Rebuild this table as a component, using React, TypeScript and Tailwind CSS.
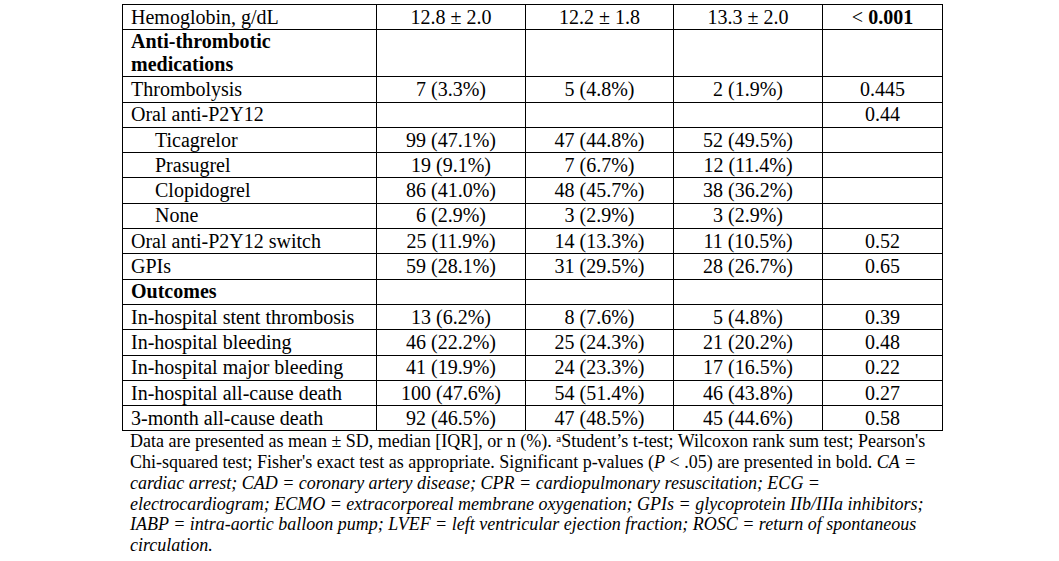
import React from "react";

type Row = {
  label: string;
  a?: string;
  b?: string;
  c?: string;
  p?: React.ReactNode;
  bold?: boolean;
  indent?: boolean;
};

const rows: Row[] = [
  {
    label: "Hemoglobin, g/dL",
    a: "12.8 ± 2.0",
    b: "12.2 ± 1.8",
    c: "13.3 ± 2.0",
    p: (
      <>
        &lt; <b>0.001</b>
      </>
    ),
  },
  { label: "Anti-thrombotic medications", bold: true },
  { label: "Thrombolysis", a: "7 (3.3%)", b: "5 (4.8%)", c: "2 (1.9%)", p: "0.445" },
  { label: "Oral anti-P2Y12", p: "0.44" },
  { label: "Ticagrelor", a: "99 (47.1%)", b: "47 (44.8%)", c: "52 (49.5%)", indent: true },
  { label: "Prasugrel", a: "19 (9.1%)", b: "7 (6.7%)", c: "12 (11.4%)", indent: true },
  { label: "Clopidogrel", a: "86 (41.0%)", b: "48 (45.7%)", c: "38 (36.2%)", indent: true },
  { label: "None", a: "6 (2.9%)", b: "3 (2.9%)", c: "3 (2.9%)", indent: true },
  { label: "Oral anti-P2Y12 switch", a: "25 (11.9%)", b: "14 (13.3%)", c: "11 (10.5%)", p: "0.52" },
  { label: "GPIs", a: "59 (28.1%)", b: "31 (29.5%)", c: "28 (26.7%)", p: "0.65" },
  { label: "Outcomes", bold: true },
  { label: "In-hospital stent thrombosis", a: "13 (6.2%)", b: "8 (7.6%)", c: "5 (4.8%)", p: "0.39" },
  { label: "In-hospital bleeding", a: "46 (22.2%)", b: "25 (24.3%)", c: "21 (20.2%)", p: "0.48" },
  { label: "In-hospital major bleeding", a: "41 (19.9%)", b: "24 (23.3%)", c: "17 (16.5%)", p: "0.22" },
  { label: "In-hospital all-cause death", a: "100 (47.6%)", b: "54 (51.4%)", c: "46 (43.8%)", p: "0.27" },
  { label: "3-month all-cause death", a: "92 (46.5%)", b: "47 (48.5%)", c: "45 (44.6%)", p: "0.58" },
];

export default function App() {
  return (
    <div className="h-[561px] w-[1059px] bg-white font-['Liberation_Serif','Times_New_Roman',serif] text-black">
      <div className="ml-[122px] w-[820px] pt-[4px]">
        <table className="w-[820px] table-fixed border-collapse text-[20px] leading-[23px]">
          <colgroup>
            <col className="w-[254px]" />
            <col className="w-[149px]" />
            <col className="w-[148px]" />
            <col className="w-[149px]" />
            <col className="w-[120px]" />
          </colgroup>
          <tbody>
            {rows.map((r) => (
              <tr key={r.label} className="h-[25.3px]">
                <td
                  className={`border border-black py-0 pr-2 ${r.indent ? "pl-[32px]" : "pl-[8px]"} ${r.bold ? "font-bold" : ""}`}
                >
                  {r.label === "Anti-thrombotic medications" ? (
                    <>
                      Anti-thrombotic
                      <br />
                      medications
                    </>
                  ) : (
                    r.label
                  )}
                </td>
                <td className="border border-black py-0 text-center">{r.a}</td>
                <td className="border border-black py-0 text-center">{r.b}</td>
                <td className="border border-black py-0 text-center">{r.c}</td>
                <td className="border border-black py-0 text-center">{r.p}</td>
              </tr>
            ))}
          </tbody>
        </table>
        <p className="whitespace-nowrap pl-[8px] text-[18px] leading-[20.7px]">
          Data are presented as mean ± SD, median [IQR], or n (%).{" "}
          <sup className="text-[11px]">a</sup>Student’s t-test; Wilcoxon rank sum test; Pearson's
          <br />
          Chi-squared test; Fisher's exact test as appropriate. Significant p-values (<i>P</i> &lt;
          .05) are presented in bold. <i>CA =</i>
          <br />
          <i>
            cardiac arrest; CAD = coronary artery disease; CPR = cardiopulmonary resuscitation; ECG =
            <br />
            electrocardiogram; ECMO = extracorporeal membrane oxygenation; GPIs = glycoprotein IIb/IIIa inhibitors;
            <br />
            IABP = intra-aortic balloon pump; LVEF = left ventricular ejection fraction; ROSC = return of spontaneous
            <br />
            circulation.
          </i>
        </p>
      </div>
    </div>
  );
}
